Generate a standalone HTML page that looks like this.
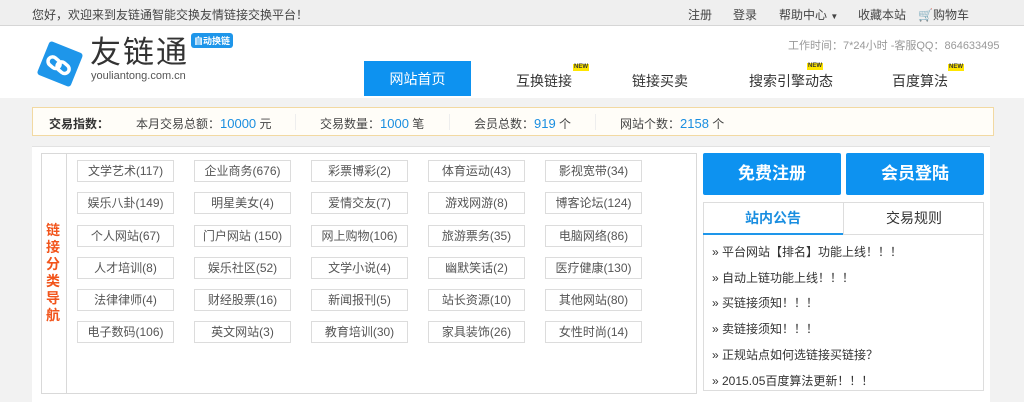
<!DOCTYPE html>
<html><head><meta charset="utf-8"><style>
*{margin:0;padding:0;box-sizing:border-box}
body{width:1024px;height:402px;overflow:hidden;background:#f2f2f2;font-family:"Liberation Sans","Noto Sans CJK SC",sans-serif;font-size:12px;color:#333;position:relative}
.a{position:absolute}
.top{left:0;top:0;width:1024px;height:26px;background:#efefef;border-bottom:1px solid #d6d6d6}
.top span{position:absolute;top:6px;font-size:12px;color:#444}
.hd{left:0;top:26px;width:1024px;height:72px;background:#fff}
.nav{position:absolute;top:71px;font-size:14px;color:#333}
.new{position:absolute;font-size:6px;font-weight:bold;color:#333;background:#ffe600;padding:0 1px;line-height:7px}
.stats{left:32px;top:107px;width:962px;height:29px;background:#fffdf8;border:1px solid #f2d9a2}
.stats span{position:absolute;top:7px;font-size:12px;color:#444}
.stats b{color:#1a8ee0;font-weight:normal;font-size:13px}
.sep{position:absolute;top:6px;width:1px;height:16px;background:#eee}
.main{left:32px;top:146px;width:958px;height:256px;background:#fff;border-top:1px solid #e2e2e2}
.lb{left:41px;top:153px;width:656px;height:241px;border:1px solid #d9d9d9;background:#fff}
.lab{left:66px;top:153px;width:1px;height:241px;background:#d9d9d9}
.lt{left:44px;top:222px;width:18px;color:#f2541b;font-weight:bold;font-size:14px;line-height:17px;text-align:center}
.c{position:absolute;width:97px;height:22px;border:1px solid #dcdcdc;text-align:center;line-height:20px;font-size:12px;color:#555}
.btn{position:absolute;top:153px;width:138px;height:42px;background:#0d92f0;border-radius:2px;color:#fff;font-size:17px;font-weight:bold;text-align:center;line-height:42px}
.tb{left:703px;top:202px;width:281px;height:189px;border:1px solid #ddd}
.li{position:absolute;left:712px;font-size:12px;color:#333}
</style></head><body>
<div class="a top">
<span style="left:32px">您好，欢迎来到友链通智能交换友情链接交换平台！</span>
<span style="left:688px">注册</span><span style="left:733px">登录</span><span style="left:779px">帮助中心 <small style="font-size:8px">▼</small></span><span style="left:858px">收藏本站</span><span style="left:918px"><span style="position:static;color:#999">🛒</span>购物车</span>
</div>
<div class="a hd"></div>
<svg class="a" style="left:36px;top:40px" width="48" height="48" viewBox="0 0 48 48"><rect x="6" y="6" width="36" height="36" rx="3" fill="#1e96ea" transform="rotate(22 24 24)"/><g fill="none" stroke="#fff" stroke-width="3.5"><rect x="12" y="18" width="13" height="9" rx="4.5" transform="rotate(40 18 22)"/><rect x="21" y="23" width="13" height="9" rx="4.5" transform="rotate(40 27 27)"/></g></svg>
<div class="a" style="left:90px;top:36px;font-size:31px;color:#333;letter-spacing:2px;line-height:34px">友链通</div>
<div class="a" style="left:91px;top:70px;font-size:11px;color:#555">youliantong.com.cn</div>
<div class="a" style="left:191px;top:33px;background:#1e96ea;color:#fff;font-size:9px;padding:1px 3px;border-radius:3px;font-weight:bold">自动换链</div>
<div class="a" style="left:788px;top:37px;font-size:11px;color:#999">工作时间：7*24小时 -客服QQ：864633495</div>
<div class="a" style="left:364px;top:61px;width:107px;height:35px;background:#0d92f0;color:#fff;font-size:14px;text-align:center;line-height:36px">网站首页</div>
<span class="nav" style="left:516px">互换链接</span><span class="new" style="left:573px;top:64px">NEW</span>
<span class="nav" style="left:632px">链接买卖</span>
<span class="nav" style="left:749px">搜索引擎动态</span><span class="new" style="left:807px;top:63px">NEW</span>
<span class="nav" style="left:892px">百度算法</span><span class="new" style="left:948px;top:64px">NEW</span>
<div class="a stats">
<span style="left:16px;font-weight:bold;color:#333">交易指数：</span>
<span style="left:103px">本月交易总额：<b>10000</b> 元</span><div class="sep" style="left:262px"></div>
<span style="left:287px">交易数量：<b>1000</b> 笔</span><div class="sep" style="left:416px"></div>
<span style="left:441px">会员总数：<b>919</b> 个</span><div class="sep" style="left:562px"></div>
<span style="left:587px">网站个数：<b>2158</b> 个</span>
</div>
<div class="a main"></div>
<div class="a lb"></div><div class="a lab"></div>
<div class="a lt">链接分类导航</div>
<div class="c" style="left:77px;top:160px">文学艺术(117)</div><div class="c" style="left:194px;top:160px">企业商务(676)</div><div class="c" style="left:311px;top:160px">彩票博彩(2)</div><div class="c" style="left:428px;top:160px">体育运动(43)</div><div class="c" style="left:545px;top:160px">影视宽带(34)</div>
<div class="c" style="left:77px;top:192px">娱乐八卦(149)</div><div class="c" style="left:194px;top:192px">明星美女(4)</div><div class="c" style="left:311px;top:192px">爱情交友(7)</div><div class="c" style="left:428px;top:192px">游戏网游(8)</div><div class="c" style="left:545px;top:192px">博客论坛(124)</div>
<div class="c" style="left:77px;top:225px">个人网站(67)</div><div class="c" style="left:194px;top:225px">门户网站 (150)</div><div class="c" style="left:311px;top:225px">网上购物(106)</div><div class="c" style="left:428px;top:225px">旅游票务(35)</div><div class="c" style="left:545px;top:225px">电脑网络(86)</div>
<div class="c" style="left:77px;top:257px">人才培训(8)</div><div class="c" style="left:194px;top:257px">娱乐社区(52)</div><div class="c" style="left:311px;top:257px">文学小说(4)</div><div class="c" style="left:428px;top:257px">幽默笑话(2)</div><div class="c" style="left:545px;top:257px">医疗健康(130)</div>
<div class="c" style="left:77px;top:289px">法律律师(4)</div><div class="c" style="left:194px;top:289px">财经股票(16)</div><div class="c" style="left:311px;top:289px">新闻报刊(5)</div><div class="c" style="left:428px;top:289px">站长资源(10)</div><div class="c" style="left:545px;top:289px">其他网站(80)</div>
<div class="c" style="left:77px;top:321px">电子数码(106)</div><div class="c" style="left:194px;top:321px">英文网站(3)</div><div class="c" style="left:311px;top:321px">教育培训(30)</div><div class="c" style="left:428px;top:321px">家具装饰(26)</div><div class="c" style="left:545px;top:321px">女性时尚(14)</div>
<div class="btn" style="left:703px">免费注册</div><div class="btn" style="left:846px">会员登陆</div>
<div class="a tb"></div>
<div class="a" style="left:703px;top:202px;width:140px;height:33px;border-bottom:2px solid #1e96ea;text-align:center;line-height:33px;font-size:14px;font-weight:bold;color:#1a8ee0">站内公告</div>
<div class="a" style="left:843px;top:202px;width:141px;height:33px;border-left:1px solid #ddd;border-bottom:1px solid #ddd;text-align:center;line-height:33px;font-size:14px;color:#333">交易规则</div>
<div class="li" style="top:243px">» 平台网站【排名】功能上线！！！</div>
<div class="li" style="top:269px">» 自动上链功能上线！！！</div>
<div class="li" style="top:294px">» 买链接须知！！！</div>
<div class="li" style="top:320px">» 卖链接须知！！！</div>
<div class="li" style="top:346px">» 正规站点如何选链接买链接？</div>
<div class="li" style="top:372px">» 2015.05百度算法更新！！！</div>
</body></html>
